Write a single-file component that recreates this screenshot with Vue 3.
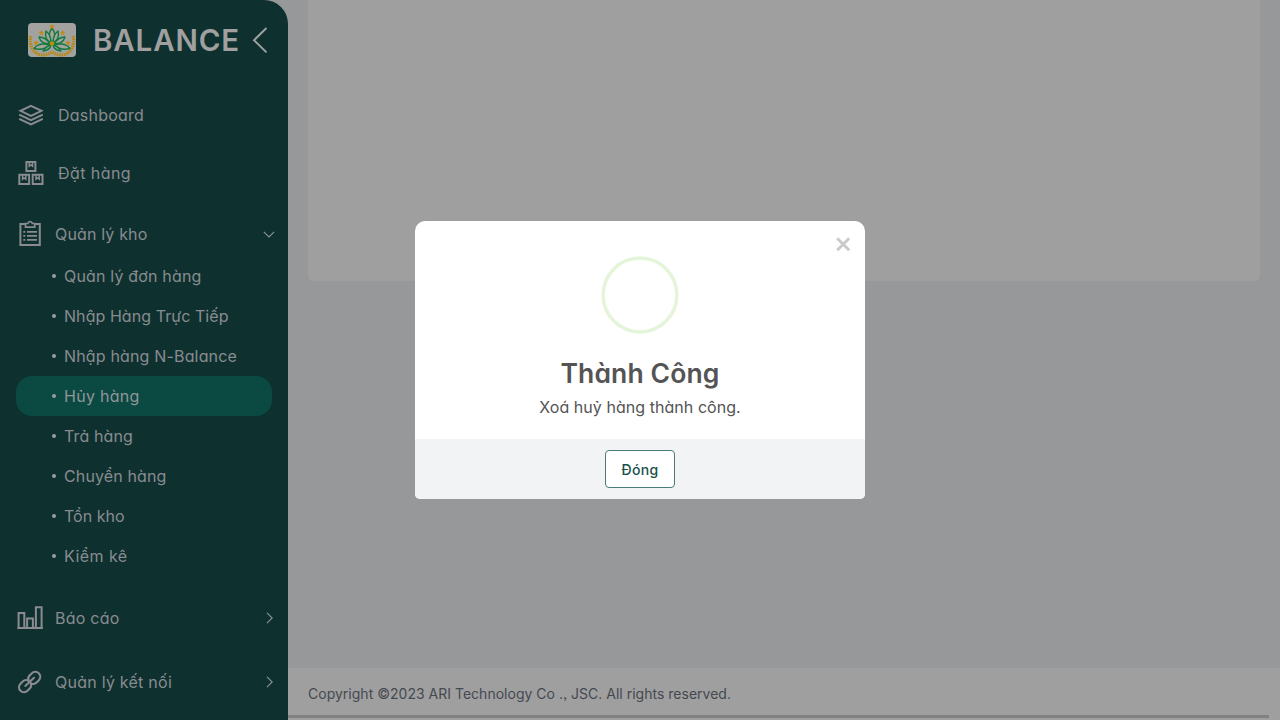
<script setup>
const children = [
  { label: 'Quản lý đơn hàng', width: 137.5 },
  { label: 'Nhập Hàng Trực Tiếp', width: 164.5 },
  { label: 'Nhập hàng N-Balance', width: 173 },
  { label: 'Hủy hàng', width: 75.5, active: true },
  { label: 'Trả hàng', width: 69 },
  { label: 'Chuyển hàng', width: 102.5 },
  { label: 'Tồn kho', width: 60.5 },
  { label: 'Kiểm kê', width: 63.5 },
]

// Tracks a label so that it spans the given width in pixels.
const vTrack = {
  mounted(el, { value }) {
    const natural = el.getBoundingClientRect().width
    const spacing = (value - natural) / Array.from(el.textContent).length
    el.style.letterSpacing = `${spacing}px`
  },
}
</script>

<template>
  <div class="app">
    <aside class="sidebar">
      <header class="brand">
        <svg class="logo" viewBox="0 0 48 34">
          <defs><clipPath id="badge"><rect width="48" height="34" rx="4" /></clipPath></defs>
          <rect width="48" height="34" rx="4" fill="#a2a2a0" />
          <g fill="none" stroke="#b78a1d" stroke-width="3.2" stroke-dasharray="1.7 .7" clip-path="url(#badge)">
            <path d="M3 13C0 22 6 33 16 32Q21 31.500 24 28.500" />
            <path d="M45 13C48 22 42 33 32 32Q27 31.500 24 28.500" />
          </g>
          <g fill="#a2a5a0" stroke="#137a3c" stroke-width="1.400" stroke-linejoin="round">
            <path d="M24 5Q18.500 12 24 20Q29.500 12 24 5Z" />
            <path d="M18 8Q16 16 23 20Q23 12 18 8Z" />
            <path d="M30 8Q32 16 25 20Q25 12 30 8Z" />
            <path d="M11 14Q13 21 22 21Q18 14 11 14Z" />
            <path d="M37 14Q35 21 26 21Q30 14 37 14Z" />
            <path d="M6 25.500Q11 19 22 22Q15 28 6 25.500Z" />
            <path d="M42 25.500Q37 19 26 22Q33 28 42 25.500Z" />
            <path d="M15 28Q18 23 23 22Q22 27 15 28Z" />
            <path d="M33 28Q30 23 25 22Q26 27 33 28Z" />
          </g>
          <g fill="#c08c16">
            <path d="M24 .8l.8 1.800 2 .2-1.500 1.300.5 2-1.800-1-1.800 1 .5-2-1.500-1.300 2-.2z" />
            <path d="M13.300 7l.8 1.800 2 .2-1.500 1.300.5 2-1.800-1-1.800 1 .5-2-1.500-1.300 2-.2z" />
            <path d="M34.700 7l.8 1.800 2 .2-1.500 1.300.5 2-1.800-1-1.800 1 .5-2-1.500-1.300 2-.2z" />
            <path d="M8 17l.8 1.800 2 .2-1.500 1.300.5 2-1.800-1-1.800 1 .5-2-1.500-1.300 2-.2z" />
            <path d="M40 17l.8 1.800 2 .2-1.500 1.300.5 2-1.800-1-1.800 1 .5-2-1.500-1.300 2-.2z" />
            <circle cx="24" cy="20.500" r="2.200" />
          </g>
        </svg>
        <span class="brand-box"><span v-track="147" class="name">BALANCE</span></span>
        <svg class="collapse" viewBox="0 0 16 28">
          <path d="M14.500 2L2 14.200L14.500 26.400" fill="none" stroke="#9fa3a3" stroke-width="1.900" />
        </svg>
      </header>

      <nav>
        <a class="item plain">
          <svg class="icon" viewBox="0 0 28 28" fill="none" stroke="currentColor" stroke-width="2">
            <path d="M14 4.800L24.500 9.800L14 14.800L3.500 9.800Z" />
            <path d="M2.200 13.600L14 19.200L25.800 13.600M2.200 17.900L14 23.500L25.800 17.900" />
          </svg>
          <span v-track="86">Dashboard</span>
        </a>
        <a class="item plain">
          <svg class="icon" viewBox="0 0 28 28" fill="none" stroke="currentColor" stroke-width="2">
            <path d="M9.400 2.900h9v9.200h-9zM2.300 15.800h9.800v9.100H2.300zM15.700 15.800h9.800v9.100h-9.800z" />
            <path d="M12.300 3v4.200l1.600-1.200 1.600 1.200V3M5.600 16v4.200l1.600-1.200 1.600 1.200V16M19 16v4.200l1.600-1.200 1.600 1.200V16" stroke-width="1.500" />
          </svg>
          <span v-track="73">Đặt hàng</span>
        </a>
        <a class="item open">
          <svg class="icon" viewBox="0 0 28 28" fill="none" stroke="currentColor" stroke-width="2">
            <path d="M8.500 4H3.400v20.900h19.400V4H17.700" />
            <path d="M8.500 3.500V7.200h9.200V3.500h-2.300Q14.900 1.600 13.100 1.600T10.800 3.500Z" stroke-width="1.700" />
            <path d="M6.300 11.800h2M10 11.800h10M6.300 15.800h2M10 15.800h10M6.300 19.800h2M10 19.800h10" stroke-width="1.700" />
          </svg>
          <span v-track="92.5">Quản lý kho</span>
          <svg class="arrow down" viewBox="0 0 12 12"><path d="M.8 3.800L6 9L11.200 3.800" /></svg>
        </a>
        <ul class="children">
          <li v-for="child in children" :key="child.label" :class="{ active: child.active }">
            <i class="dot"></i>
            <span v-track="child.width">{{ child.label }}</span>
          </li>
        </ul>
        <a class="item group first">
          <svg class="icon" viewBox="0 0 28 28" fill="none" stroke="currentColor" stroke-width="2">
            <path d="M1.600 9h5.700v15H1.600zM10.100 14.600h5.800V24h-5.800zM18.900 3.200h5.700V24h-5.700z" />
            <path d="M.5 24h25.200" />
          </svg>
          <span v-track="64.5">Báo cáo</span>
          <svg class="arrow" viewBox="0 0 12 12"><path d="M4 .8L9.200 6L4 11.200" /></svg>
        </a>
        <a class="item group">
          <svg class="icon" viewBox="0 0 28 28" fill="none" stroke="currentColor" stroke-width="2.100" stroke-linecap="round">
            <path d="M10.700 12.300C8.700 11.700 7 12.200 5.700 13.500L3.700 15.500C1.500 17.700 1.500 20.700 3.500 22.700C5.500 24.700 8.500 24.700 10.700 22.500L12.700 20.500C14.300 18.900 14.500 16.800 13.600 15" />
            <path d="M11.700 13C10.800 11.200 11 9.100 12.600 7.500L14.600 5.500C16.800 3.300 19.800 3.300 21.800 5.300C23.800 7.300 23.800 10.300 21.600 12.500L19.600 14.500C18.300 15.800 16.600 16.300 14.600 15.700" />
            <path d="M8.300 17.900L17 9.800" />
          </svg>
          <span v-track="117">Quản lý kết nối</span>
          <svg class="arrow" viewBox="0 0 12 12"><path d="M4 .8L9.200 6L4 11.200" /></svg>
        </a>
      </nav>
    </aside>

    <main class="page">
      <section class="card"></section>
      <footer class="footer">
        <span v-track="423">Copyright ©2023 ARI Technology Co ., JSC. All rights reserved.</span>
        <div class="scrollbar"></div>
      </footer>
    </main>

    <div class="overlay">
      <div class="dialog" role="dialog">
        <svg class="close" viewBox="0 0 16 16"><path d="M2.200 2.200L14.200 14.200M14.200 2.200L2.200 14.200" stroke="#cacaca" stroke-width="2.900" /></svg>
        <div class="dialog-body">
          <svg class="ring" viewBox="0 0 78 78"><circle cx="39" cy="39" r="36.900" fill="none" stroke="#e4f5da" stroke-width="3.500" /></svg>
          <h2><span v-track="159">Thành Công</span></h2>
          <p><span v-track="201.5">Xoá huỷ hàng thành công.</span></p>
        </div>
        <div class="dialog-actions">
          <button><span v-track="37">Đóng</span></button>
        </div>
      </div>
    </div>
  </div>
</template>

<style>
body {
  overflow: hidden;
}
</style>

<style scoped>
.app {
  display: flex;
  height: 720px;
  background: #97989a;
  font-family: Inter, "Noto Sans", sans-serif;
  font-feature-settings: "cv11", "ss03";
  font-size: 16px;
  white-space: nowrap;
}
.sidebar {
  width: 288px;
  flex: none;
  box-sizing: border-box;
  background: #0e312f;
  border-top-right-radius: 24px;
  color: #898b90;
}
.brand {
  display: flex;
  align-items: center;
  height: 80px;
  margin-bottom: 6px;
  padding-left: 28px;
}
.logo {
  width: 48px;
  height: 34px;
  margin-right: 17px;
}
.brand-box {
  width: 159px;
}
.name {
  font-size: 29.5px;
  font-weight: 600;
  color: #a0a0a0;
}
.collapse {
  width: 16px;
  height: 28px;
}
.item {
  display: flex;
  align-items: center;
  padding: 0 13px 0 17px;
}
.icon {
  width: 28px;
  height: 28px;
  margin-right: 10px;
}
.plain {
  height: 58px;
}
.plain .icon {
  margin-right: 13px;
}
.open {
  height: 44px;
  margin-top: 10px;
}
.group {
  height: 64px;
}
.first {
  margin-top: 10px;
}
.arrow {
  width: 12px;
  height: 12px;
  margin-left: auto;
  fill: none;
  stroke: #8c9495;
  stroke-width: 1.1;
}
.children {
  margin: 0;
  padding: 0 16px;
  list-style: none;
}
.children li {
  display: flex;
  align-items: center;
  height: 40px;
  padding-left: 36px;
}
.children .active {
  border-radius: 16px;
  background: #0b4943;
  color: #919698;
}
.dot {
  width: 4px;
  height: 4px;
  margin-right: 8px;
  border-radius: 50%;
  background: #999e9e;
}
.page {
  display: flex;
  flex: 1;
  flex-direction: column;
  justify-content: space-between;
}
.card {
  height: 281px;
  margin: 0 20px;
  border-radius: 0 0 6px 6px;
  background: #9f9f9f;
}
.footer {
  display: flex;
  flex-direction: column;
  align-items: flex-start;
  justify-content: space-between;
  height: 52px;
  background: #9f9f9f;
  color: #454951;
  font-size: 14px;
}
.footer span {
  margin: 17px 0 0 20px;
  line-height: 18px;
}
.scrollbar {
  width: 981px;
  height: 3px;
  margin-bottom: 2px;
  background: #818181;
}
.overlay {
  position: absolute;
  inset: 0;
  display: flex;
  align-items: center;
  justify-content: center;
}
.dialog {
  position: relative;
  width: 450px;
  height: 278px;
  overflow: hidden;
  border-radius: 10px 10px 5px 5px;
  background: #fff;
  color: #545454;
}
.close {
  position: absolute;
  top: 15px;
  right: 14px;
  width: 16px;
  height: 16px;
}
.dialog-body {
  height: 218px;
  box-sizing: border-box;
  padding-top: 35px;
  text-align: center;
}
.ring {
  display: block;
  width: 78px;
  height: 78px;
  margin: 0 auto 22px;
}
h2 {
  margin: 0;
  font-size: 26.5px;
  font-weight: 600;
  line-height: 34px;
}
p {
  margin: 5px 0 0;
  line-height: 24px;
}
.dialog-actions {
  display: flex;
  align-items: center;
  justify-content: center;
  height: 60px;
  background: #f2f3f5;
}
button {
  width: 70px;
  height: 38px;
  padding: 0;
  border: 1px solid #4a7c78;
  border-radius: 4px;
  background: #fff;
  color: #174f49;
  font-family: inherit;
  font-feature-settings: inherit;
  font-size: 14px;
  font-weight: 500;
}
</style>
